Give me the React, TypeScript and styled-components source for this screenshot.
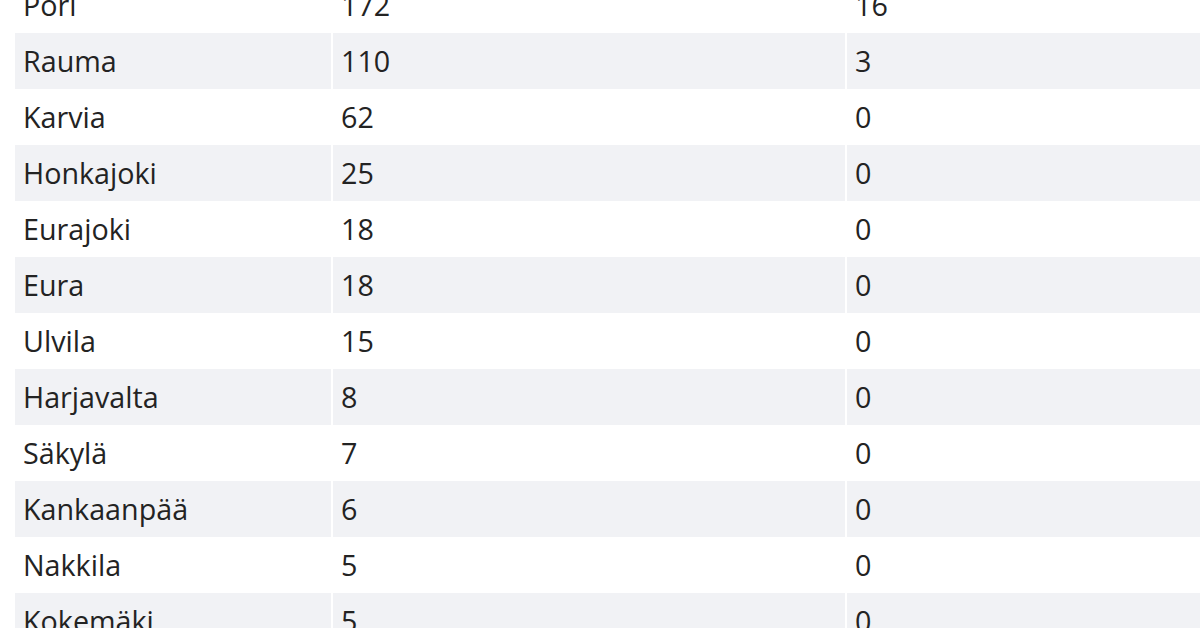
import styled, { createGlobalStyle } from 'styled-components';

const GlobalStyle = createGlobalStyle`
  html, body {
    margin: 0;
    padding: 0;
    background: #ffffff;
    overflow: hidden;
  }
`;

const Page = styled.div`
  width: 1200px;
  height: 628px;
  overflow: hidden;
  font-family: 'Open Sans', 'Noto Sans', sans-serif;
  color: #232323;
`;

const Table = styled.table`
  margin: -23px 0 0 13px;
  border-collapse: separate;
  border-spacing: 2px 0;
  table-layout: fixed;
  width: 1240px;
  font-size: 28.7px;
  line-height: 42px;
`;

const Row = styled.tr<{ $striped: boolean }>`
  background-color: ${(p) => (p.$striped ? '#f1f2f5' : 'transparent')};

  & td {
    background-color: inherit;
  }
`;

const Cell = styled.td`
  padding: 7px 6px 7px 8px;
  height: 42px;
  white-space: nowrap;
  vertical-align: middle;
`;

const rows: [string, number, number][] = [
  ['Pori', 172, 16],
  ['Rauma', 110, 3],
  ['Karvia', 62, 0],
  ['Honkajoki', 25, 0],
  ['Eurajoki', 18, 0],
  ['Eura', 18, 0],
  ['Ulvila', 15, 0],
  ['Harjavalta', 8, 0],
  ['Säkylä', 7, 0],
  ['Kankaanpää', 6, 0],
  ['Nakkila', 5, 0],
  ['Kokemäki', 5, 0],
  ['Jämijärvi', 3, 0],
];

function App() {
  return (
    <Page>
      <GlobalStyle />
      <Table>
        <colgroup>
          <col style={{ width: 316 }} />
          <col style={{ width: 512 }} />
          <col />
        </colgroup>
        <tbody>
          {rows.map(([city, cases, other], i) => (
            <Row key={city} $striped={i % 2 === 1}>
              <Cell>{city}</Cell>
              <Cell>{cases}</Cell>
              <Cell>{other}</Cell>
            </Row>
          ))}
        </tbody>
      </Table>
    </Page>
  );
}

export default App;
